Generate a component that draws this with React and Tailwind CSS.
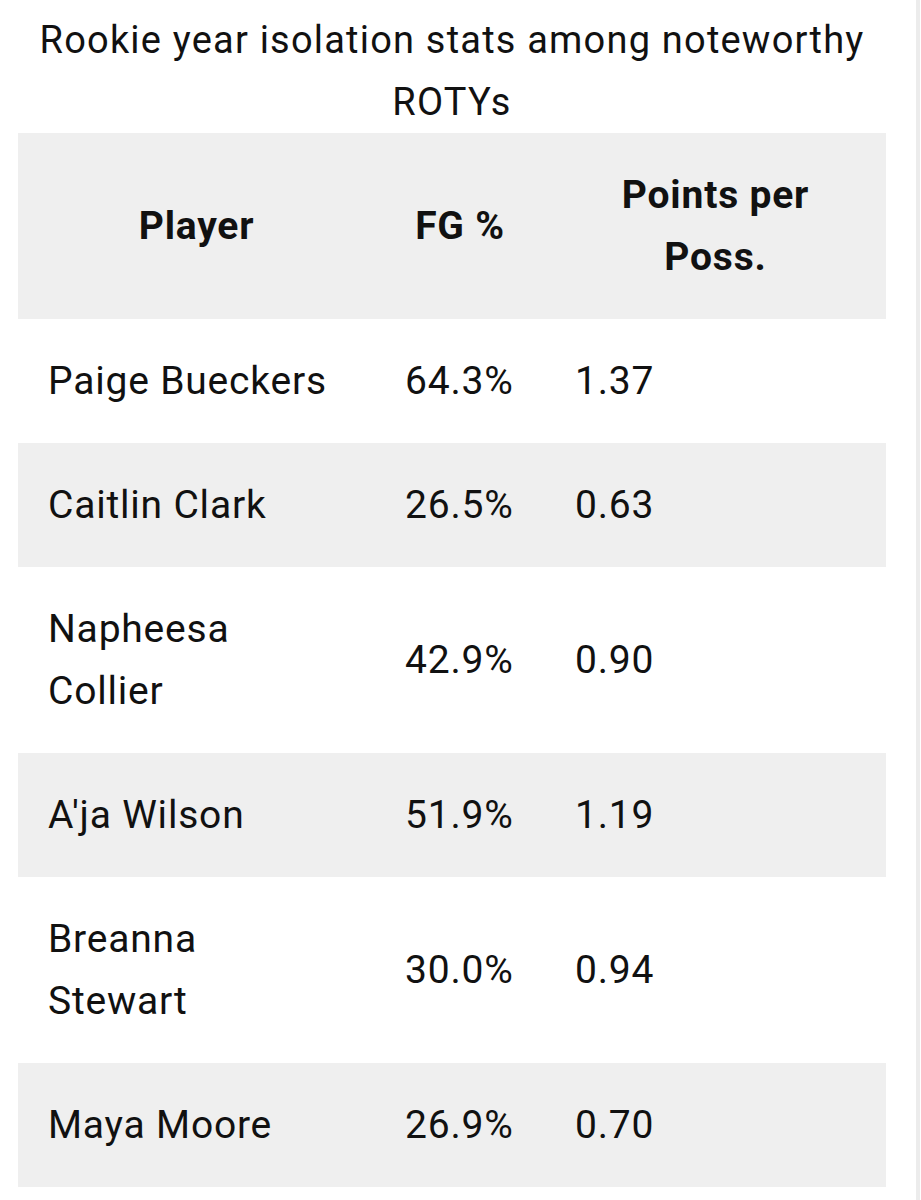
import React from 'react';

const rows = [
  { name: ['Paige Bueckers'], fg: '64.3%', ppp: '1.37' },
  { name: ['Caitlin Clark'], fg: '26.5%', ppp: '0.63' },
  { name: ['Napheesa', 'Collier'], fg: '42.9%', ppp: '0.90' },
  { name: ["A'ja Wilson"], fg: '51.9%', ppp: '1.19' },
  { name: ['Breanna', 'Stewart'], fg: '30.0%', ppp: '0.94' },
  { name: ['Maya Moore'], fg: '26.9%', ppp: '0.70' },
];

const App = () => {
  return (
    <div className="w-[921px] h-[1200px] bg-white flex text-[#111] font-['Roboto',sans-serif]">
      <div className="w-[916px] pl-[18px] pr-[30px]">
        {/* Title */}
        <h1 className="pt-[9px] text-center text-[38px] leading-[62px] tracking-[1.2px] font-normal whitespace-nowrap">
          Rookie year isolation stats among noteworthy
          <br />
          ROTYs
        </h1>

        {/* Table */}
        <div className="grid grid-cols-[357px_170px_341px] text-[39px] leading-[62px] tracking-[0.8px]">
          <div className="bg-[#efefef] py-[31px] font-bold flex items-center justify-center">Player</div>
          <div className="bg-[#efefef] py-[31px] font-bold flex items-center justify-center">FG %</div>
          <div className="bg-[#efefef] py-[31px] font-bold flex items-center justify-center text-center">
            Points per
            <br />
            Poss.
          </div>

          {rows.map((r, i) => {
            const bg = i % 2 === 1 ? 'bg-[#efefef]' : 'bg-white';
            return (
              <React.Fragment key={r.fg + r.ppp}>
                <div className={`${bg} py-[31px] pl-[30px]`}>
                  {r.name.map((n) => (
                    <div key={n}>{n}</div>
                  ))}
                </div>
                <div className={`${bg} py-[31px] pl-[30px] flex items-center`}>{r.fg}</div>
                <div className={`${bg} py-[31px] pl-[30px] flex items-center`}>{r.ppp}</div>
              </React.Fragment>
            );
          })}
        </div>
      </div>
      <div className="w-[4px] bg-[#ececec]" />
    </div>
  );
};

export default App;
